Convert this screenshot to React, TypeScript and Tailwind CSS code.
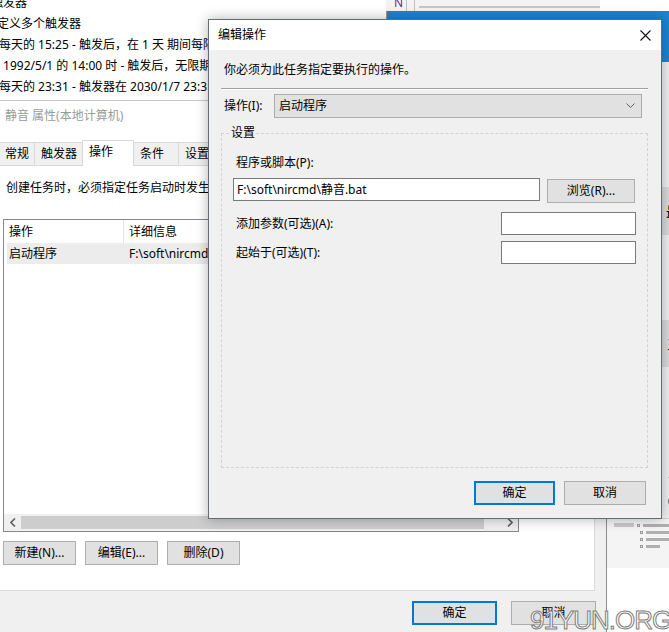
const ui = "font-['Noto_Sans','Noto_Sans_CJK_SC',sans-serif] text-[12px] text-black";

function Btn({ label, w, primary }: { label: string; w: string; primary?: boolean }) {
  return (
    <div
      className={
        "h-[24px] flex items-center justify-center bg-[#e1e1e1] " +
        w +
        (primary ? " border-2 border-[#0078d7]" : " border border-[#adadad]")
      }
    >
      {label}
    </div>
  );
}

function Chevron({ dir }: { dir: "down" | "left" | "right" }) {
  if (dir === "down")
    return (
      <svg width="9" height="6" viewBox="0 0 9 6">
        <path d="M0.5 0.5 L4.5 4.5 L8.5 0.5" fill="none" stroke="#606060" strokeWidth="1" />
      </svg>
    );
  return (
    <svg width="6" height="9" viewBox="0 0 6 9">
      <path
        d={dir === "left" ? "M5 0.5 L1 4.5 L5 8.5" : "M1 0.5 L5 4.5 L1 8.5"}
        fill="none"
        stroke="#606060"
        strokeWidth="1.6"
      />
    </svg>
  );
}

function TriggerList() {
  return (
    <div className="absolute left-0 top-0 w-[386px] h-[101px] bg-white border-b border-[#c8c8c8] overflow-hidden">
      <div className="leading-[21px] whitespace-nowrap">
        <div className="-mt-[8px] -ml-[9px]">触发器</div>
        <div className="-ml-[3px]">定义多个触发器</div>
        <div className="-ml-[1px]">每天的 15:25 - 触发后，在 1 天 期间每隔 1 小时重复一次。</div>
        <div className="-ml-[12px]">在 1992/5/1 的 14:00 时 - 触发后，无限期地每隔 1 天重复一次。</div>
        <div className="-ml-[1px]">每天的 23:31 - 触发器在 2030/1/7 23:31 时过期。</div>
      </div>
    </div>
  );
}

function Tab({ label, w, active, first }: { label: string; w: string; active?: boolean; first?: boolean }) {
  return (
    <div
      className={
        "flex items-center border border-[#d9d9d9] border-b-0 " +
        w +
        (first ? " -ml-[6px] justify-end pr-[5px]" : " -ml-[1px] pl-[6px]") +
        (active ? " h-[26px] bg-white relative z-10 -mb-[1px] pb-[3px]" : " h-[23px] bg-[#f0f0f0]")
      }
    >
      {label}
    </div>
  );
}

function PropsWindow() {
  return (
    <div className="absolute left-0 top-[101px] w-[607px] h-[540px] bg-[#f0f0f0] border-r border-[#8c8c8c] flex flex-col">
      <div className="h-[29px] bg-white flex items-center pl-[5px] text-[#9a9a9a]">静音 属性(本地计算机)</div>
      <div className="h-[35px] bg-white flex items-end">
        <Tab label="常规" w="w-[41px]" first />
        <Tab label="触发器" w="w-[49px]" />
        <Tab label="操作" w="w-[52px]" active />
        <Tab label="条件" w="w-[46px]" />
        <Tab label="设置" w="w-[46px]" />
        <Tab label="历史记录" w="w-[60px]" />
      </div>
      <div className="-ml-[1px] w-[596px] h-[426px] bg-white border border-[#d9d9d9] flex flex-col">
        <div className="mt-[14px] ml-[6px] leading-[16px] whitespace-nowrap">
          创建任务时，必须指定任务启动时发生的操作。若要更改这些操作，使用“属性”命令打开任务属性页。
        </div>
        <div className="mt-[23px] ml-[3px] w-[516px] h-[313px] border border-[#828790] flex flex-col">
          <div className="h-[23px] flex items-center">
            <div className="w-[120px] h-full flex items-center pl-[5px] border-r border-[#e5e5e5]">操作</div>
            <div className="pl-[5px]">详细信息</div>
          </div>
          <div className="h-[21px] ml-[3px] flex items-center bg-[#ececec]">
            <div className="w-[117px] pl-[2px]">启动程序</div>
            <div className="pl-[5px]">F:\soft\nircmd\静音.bat</div>
          </div>
          <div className="flex-1" />
          <div className="h-[17px] flex items-center bg-[#f0f0f0]">
            <div className="w-[17px] h-full flex items-center justify-center">
              <Chevron dir="left" />
            </div>
            <div className="w-[463px] h-[13px] bg-[#cdcdcd]" />
            <div className="flex-1 h-full flex items-center justify-end pr-[5px]">
              <Chevron dir="right" />
            </div>
          </div>
        </div>
        <div className="mt-[9px] ml-[3px] flex gap-[9px]">
          <Btn label="新建(N)..." w="w-[73px]" />
          <Btn label="编辑(E)..." w="w-[73px]" />
          <Btn label="删除(D)" w="w-[73px]" />
        </div>
      </div>
      <div className="mt-[10px] flex gap-[14px] pl-[412px]">
        <Btn label="确定" w="w-[85px]" primary />
        <Btn label="取消" w="w-[85px]" />
      </div>
    </div>
  );
}

function BlueWindow() {
  return (
    <div className="absolute left-[386px] top-[11px] w-[290px] h-[557px] bg-[#f0f0f0] border-l border-[#9a9a9a] flex flex-col">
      <div className="h-[51px] bg-[#1c84d6]" />
      <div className="flex-1 flex flex-col items-end">
        <div className="mt-[125px] w-[20px] h-[48px] bg-[#dadada] flex items-center pl-[10px] text-[14px] overflow-hidden">最</div>
        <div className="mt-[85px] w-[20px] h-[47px] bg-[#dadada] flex items-center pl-[11px] text-[14px] overflow-hidden">三</div>
        <div className="mt-[110px] w-[20px] pl-[12px] flex flex-col gap-[14px]">
          <Chevron dir="down" />
          <div className="w-[8px] h-[9px] rounded-full border border-[#707070]" />
        </div>
        <div className="flex-1" />
        <div className="w-[70px] h-[50px] bg-[#f4f4f4] border-t border-[#cfcfcf] flex flex-col gap-[4px] pt-[4px] pl-[8px]">
          <div className="flex gap-[3px] items-center">
            <div className="w-[20px] h-[4px] bg-[#c8c8c8]" />
            <div className="w-[3px] h-[3px] border border-[#999]" />
            <div className="w-[30px] h-[3px] bg-[#b0b0b0]" />
          </div>
          <div className="flex gap-[3px] items-center pl-[26px]">
            <div className="w-[3px] h-[3px] border border-[#999]" />
            <div className="w-[24px] h-[3px] bg-[#b0b0b0]" />
          </div>
          <div className="flex gap-[3px] items-center pl-[26px]">
            <div className="w-[3px] h-[3px] border border-[#999]" />
            <div className="w-[28px] h-[3px] bg-[#b0b0b0]" />
          </div>
          <div className="flex gap-[3px] items-center pl-[26px]">
            <div className="w-[3px] h-[3px] border border-[#999]" />
            <div className="w-[14px] h-[3px] bg-[#b0b0b0]" />
          </div>
        </div>
      </div>
    </div>
  );
}

function EditDialog() {
  return (
    <div className="absolute left-[208px] top-[19px] w-[454px] h-[500px] bg-[#f0f0f0] border border-[#666c73] shadow-[0_0_12px_rgba(0,0,0,0.3)] flex flex-col">
      <div className="h-[30px] bg-white flex items-center justify-between pl-[9px] pr-[10px]">
        <span>编辑操作</span>
        <svg width="11" height="11" viewBox="0 0 11 11">
          <path d="M0.5 0.5 L10.5 10.5 M10.5 0.5 L0.5 10.5" stroke="#111" strokeWidth="1.1" />
        </svg>
      </div>
      <div className="flex-1 flex flex-col">
        <div className="mt-[12px] ml-[15px] leading-[16px]">你必须为此任务指定要执行的操作。</div>
        <div className="mt-[10px] ml-[12px] mr-[13px] border-t border-[#a0a0a0] border-b border-b-white" />
        <div className="mt-[4px] h-[24px] flex items-center">
          <span className="ml-[15px] w-[50px]">操作(I):</span>
          <div className="flex-1 mr-[19px] h-full bg-[#e1e1e1] border border-[#adadad] flex items-center justify-between pl-[4px] pr-[6px]">
            <span>启动程序</span>
            <Chevron dir="down" />
          </div>
        </div>
        <fieldset className="mt-[7px] ml-[12px] mr-[13px] border border-dashed border-[#d2d2d2]">
          <legend className="ml-[8px] px-[1px] leading-[16px]">设置</legend>
          <div className="h-[326px] flex flex-col">
            <div className="mt-[14px] ml-[14px] leading-[16px]">程序或脚本(P):</div>
            <div className="mt-[7px] ml-[11px] flex items-start gap-[7px]">
              <div className="w-[307px] h-[23px] bg-white border border-[#7a7a7a] flex items-center pl-[3px]">
                F:\soft\nircmd\静音.bat
              </div>
              <div className="mt-[1px]">
                <Btn label="浏览(R)..." w="w-[88px]" />
              </div>
            </div>
            <div className="mt-[9px] h-[23px] flex items-center justify-between">
              <span className="ml-[14px]">添加参数(可选)(A):</span>
              <div className="mr-[11px] w-[135px] h-full bg-white border border-[#7a7a7a]" />
            </div>
            <div className="mt-[6px] h-[23px] flex items-center justify-between">
              <span className="ml-[14px]">起始于(可选)(T):</span>
              <div className="mr-[11px] w-[135px] h-full bg-white border border-[#7a7a7a]" />
            </div>
          </div>
        </fieldset>
        <div className="mt-auto mb-[13px] mr-[15px] flex justify-end gap-[9px]">
          <Btn label="确定" w="w-[81px]" primary />
          <Btn label="取消" w="w-[82px]" />
        </div>
      </div>
    </div>
  );
}

export default function App() {
  return (
    <div className={"relative w-[669px] h-[632px] overflow-hidden bg-white " + ui}>
      <BlueWindow />
      <div className="absolute left-[386px] top-0 w-[214px] h-[11px] bg-[#f3f3f3] flex">
        <div className="w-[18px] text-[#7a1f8f] text-[12px] leading-[8px] pl-[8px] -mt-[1px]">N</div>
        <div className="w-[9px] h-full border-x border-[#c0c0c0] ml-[2px]" />
        <div className="flex-1 border-b-2 border-[#c6c6c6] h-[8px] ml-[4px]" />
      </div>
      <TriggerList />
      <PropsWindow />
      <EditDialog />
      <div className="absolute left-[530px] top-[607px] font-['Liberation_Sans',sans-serif] text-[26px] tracking-[-1px] text-white [-webkit-text-stroke:1px_#7d7d7d] leading-[26px] whitespace-nowrap">
        91YUN.ORG
      </div>
    </div>
  );
}
